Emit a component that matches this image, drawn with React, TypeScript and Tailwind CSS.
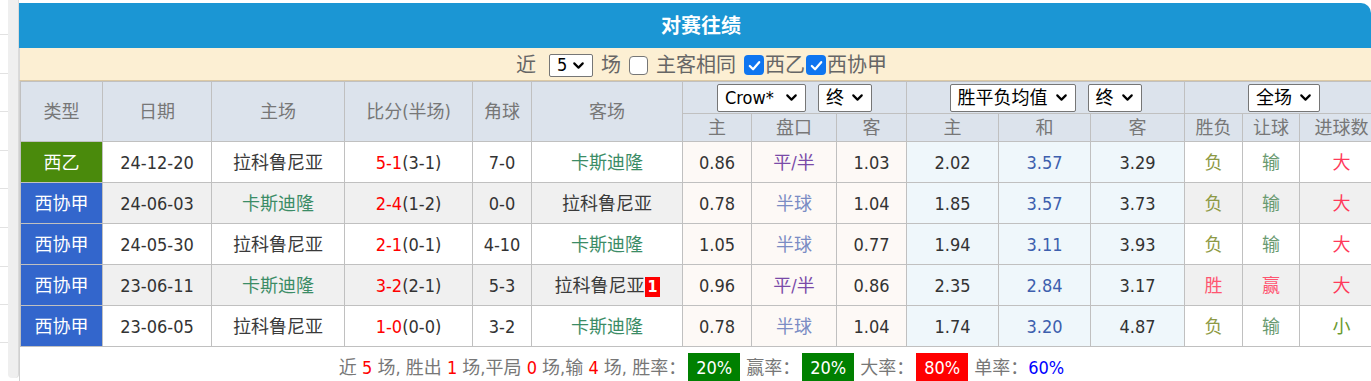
import { ChevronDown } from 'lucide-react';

const FONT = "font-['DejaVu_Sans_Condensed','Liberation_Sans','Noto_Sans_CJK_SC',sans-serif]";

type Row = {
  type: string;
  typeBg: string;
  date: string;
  home: string;
  score: string;
  half: string;
  corner: string;
  away: string;
  badge?: string;
  o1: string;
  line: string;
  o2: string;
  e1: string;
  e2: string;
  e3: string;
  r1: string;
  r2: string;
  r3: string;
};

const rows: Row[] = [
  { type: '西乙', typeBg: 'bg-[#4a8a0c]', date: '24-12-20', home: '拉科鲁尼亚', score: '5-1', half: '(3-1)', corner: '7-0', away: '卡斯迪隆', o1: '0.86', line: '平/半', o2: '1.03', e1: '2.02', e2: '3.57', e3: '3.29', r1: '负', r2: '输', r3: '大' },
  { type: '西协甲', typeBg: 'bg-[#3366cc]', date: '24-06-03', home: '卡斯迪隆', score: '2-4', half: '(1-2)', corner: '0-0', away: '拉科鲁尼亚', o1: '0.78', line: '半球', o2: '1.04', e1: '1.85', e2: '3.57', e3: '3.73', r1: '负', r2: '输', r3: '大' },
  { type: '西协甲', typeBg: 'bg-[#3366cc]', date: '24-05-30', home: '拉科鲁尼亚', score: '2-1', half: '(0-1)', corner: '4-10', away: '卡斯迪隆', o1: '1.05', line: '半球', o2: '0.77', e1: '1.94', e2: '3.11', e3: '3.93', r1: '负', r2: '输', r3: '大' },
  { type: '西协甲', typeBg: 'bg-[#3366cc]', date: '23-06-11', home: '卡斯迪隆', score: '3-2', half: '(2-1)', corner: '5-3', away: '拉科鲁尼亚', badge: '1', o1: '0.96', line: '平/半', o2: '0.86', e1: '2.35', e2: '2.84', e3: '3.17', r1: '胜', r2: '赢', r3: '大' },
  { type: '西协甲', typeBg: 'bg-[#3366cc]', date: '23-06-05', home: '拉科鲁尼亚', score: '1-0', half: '(0-0)', corner: '3-2', away: '卡斯迪隆', o1: '0.78', line: '半球', o2: '1.04', e1: '1.74', e2: '3.20', e3: '4.87', r1: '负', r2: '输', r3: '小' },
];

const sideLines = ['h-[35px]', 'h-[39px]', 'h-[38px]', 'h-[39px]', 'h-[38px]', 'h-[39px]', 'h-[39px]', 'h-[38px]', 'h-[38px]'];

function teamColor(name: string) {
  return name === '卡斯迪隆' ? 'text-[#3b8c66]' : 'text-[#3a3a3a]';
}

function resultColor(v: string) {
  if (v === '胜' || v === '赢') return 'text-[#ff5570]';
  if (v === '大') return 'text-[#ff3a5a]';
  if (v === '小') return 'text-[#6a9a30]';
  if (v === '输') return 'text-[#6a9a70]';
  return 'text-[#8e9a45]';
}

function Select({ label, w, h = 'h-[28px]' }: { label: string; w: string; h?: string }) {
  return (
    <span className={`inline-flex items-center justify-between ${h} ${w} bg-white border border-[#767676] rounded-[2px] pl-[7px] pr-[5px] text-black text-[18px] leading-none`}>
      <span>{label}</span>
      <ChevronDown className="w-[17px] h-[17px]" strokeWidth={3} />
    </span>
  );
}

function Check({ on }: { on: boolean }) {
  if (!on) {
    return <span className="inline-block w-[19px] h-[19px] rounded-[4px] border border-[#767676] bg-white" />;
  }
  return (
    <span className="inline-flex items-center justify-center w-[20px] h-[20px] rounded-[4px] bg-[#0f75f0]">
      <svg viewBox="0 0 16 16" className="w-[15px] h-[15px]" fill="none" stroke="white" strokeWidth={2.4} strokeLinecap="round" strokeLinejoin="round">
        <path d="M3 8.5 L6.5 12 L13 4.5" />
      </svg>
    </span>
  );
}

const th = 'border border-[#c0c0c0] text-center font-normal text-[#777]';
const td = 'border border-[#c0c0c0] text-center p-0';

export default function App() {
  return (
    <div className={`w-[1371px] h-[381px] overflow-hidden flex bg-white text-[18px] ${FONT}`}>
      {/* 왼쪽 가장자리 */}
      <div className="w-[8px] shrink-0 flex flex-col">
        {sideLines.map((h, i) => (
          <div key={i} className={`${h} border-b border-[#e2e2e2]`} />
        ))}
      </div>
      <div className="w-[11px] shrink-0 h-[378px] bg-[#efefef] border-r border-[#dadada] rounded-b-[4px]" />

      <div className="w-[1364px] shrink-0">
        {/* 제목 */}
        <div className="mt-[3px] w-[1352px] h-[45px] bg-[#1b96d4] rounded-tr-[10px] flex items-center justify-center pl-[12px]">
          <span className="text-white text-[20px] font-bold">对赛往绩</span>
        </div>

        {/* 필터 */}
        <div className="h-[33px] bg-[#fcefd3] border-b border-[#dcc9a4] border-l border-l-[#d8d8d8] flex items-center justify-center text-[#666] text-[20px] pt-[2px]">
          <span className="mr-[13px]">近</span>
          <Select label="5" w="w-[44px]" h="h-[23px]" />
          <span className="ml-[8px] mr-[8px]">场</span>
          <Check on={false} />
          <span className="ml-[8px] mr-[8px]">主客相同</span>
          <Check on />
          <span className="mx-[1px]">西乙</span>
          <Check on />
          <span className="ml-[1px]">西协甲</span>
        </div>

        {/* 표 */}
        <div className="border-l border-[#d0d0d0]">
          <table className="table-fixed border-collapse w-[1363px]">
            <colgroup>
              <col className="w-[82px]" />
              <col className="w-[109px]" />
              <col className="w-[133px]" />
              <col className="w-[128px]" />
              <col className="w-[59px]" />
              <col className="w-[151px]" />
              <col className="w-[69px]" />
              <col className="w-[85px]" />
              <col className="w-[70px]" />
              <col className="w-[92px]" />
              <col className="w-[92px]" />
              <col className="w-[94px]" />
              <col className="w-[58px]" />
              <col className="w-[57px]" />
              <col className="w-[84px]" />
            </colgroup>
            <thead className="bg-[#dce3ec]">
              <tr className="h-[32px]">
                <th rowSpan={2} className={th}>类型</th>
                <th rowSpan={2} className={th}>日期</th>
                <th rowSpan={2} className={th}>主场</th>
                <th rowSpan={2} className={th}>比分(半场)</th>
                <th rowSpan={2} className={th}>角球</th>
                <th rowSpan={2} className={th}>客场</th>
                <th colSpan={3} className={th}>
                  <div className="flex items-center justify-center gap-[12px]">
                    <Select label="Crow*" w="w-[89px]" />
                    <Select label="终" w="w-[54px]" />
                  </div>
                </th>
                <th colSpan={3} className={th}>
                  <div className="flex items-center justify-center gap-[12px]">
                    <Select label="胜平负均值" w="w-[126px]" />
                    <Select label="终" w="w-[54px]" />
                  </div>
                </th>
                <th colSpan={3} className={th}>
                  <div className="flex items-center justify-center">
                    <Select label="全场" w="w-[72px]" />
                  </div>
                </th>
              </tr>
              <tr className="h-[26px]">
                <th className={th}>主</th>
                <th className={th}>盘口</th>
                <th className={th}>客</th>
                <th className={th}>主</th>
                <th className={th}>和</th>
                <th className={th}>客</th>
                <th className={th}>胜负</th>
                <th className={th}>让球</th>
                <th className={`${th} whitespace-nowrap`}>进球数</th>
              </tr>
            </thead>
            <tbody>
              {rows.map((r, i) => {
                const band = i % 2 === 1 ? 'bg-[#f0f0f0]' : 'bg-white';
                return (
                  <tr key={i} className="h-[41px]">
                    <td className={`${td} ${r.typeBg} text-white`}>{r.type}</td>
                    <td className={`${td} ${band} text-[#333]`}>{r.date}</td>
                    <td className={`${td} ${band} ${teamColor(r.home)}`}>{r.home}</td>
                    <td className={`${td} ${band} text-[#333]`}>
                      <span className="text-[#ff0000]">{r.score}</span>{r.half}
                    </td>
                    <td className={`${td} ${band} text-[#333]`}>{r.corner}</td>
                    <td className={`${td} ${band} ${teamColor(r.away)}`}>
                      {r.away}
                      {r.badge && (
                        <span className="inline-block align-middle ml-[1px] px-[2px] h-[20px] leading-[20px] bg-[#ff0000] text-white font-bold text-[16px]">{r.badge}</span>
                      )}
                    </td>
                    <td className={`${td} bg-[#fdf9f6] text-[#333]`}>{r.o1}</td>
                    <td className={`${td} bg-[#fdf9f6] ${r.line === '半球' ? 'text-[#7b8cc4]' : 'text-[#7a4aa8]'}`}>{r.line}</td>
                    <td className={`${td} bg-[#fdf9f6] text-[#333]`}>{r.o2}</td>
                    <td className={`${td} bg-[#eff7fb] text-[#333]`}>{r.e1}</td>
                    <td className={`${td} bg-[#eff7fb] text-[#3d5fae]`}>{r.e2}</td>
                    <td className={`${td} bg-[#eff7fb] text-[#333]`}>{r.e3}</td>
                    <td className={`${td} ${band} ${resultColor(r.r1)}`}>{r.r1}</td>
                    <td className={`${td} ${band} ${resultColor(r.r2)}`}>{r.r2}</td>
                    <td className={`${td} ${band} ${resultColor(r.r3)}`}>{r.r3}</td>
                  </tr>
                );
              })}
            </tbody>
          </table>

          {/* 통계 */}
          <div className="pt-[6px] h-[40px] flex items-start justify-center text-[#777]">
            <div className="flex items-center h-[28px] whitespace-pre">
              <span>近 </span><span className="text-[#ff0000]">5</span><span> 场, 胜出 </span>
              <span className="text-[#ff0000]">1</span><span> 场,平局 </span>
              <span className="text-[#ff0000]">0</span><span> 场,输 </span>
              <span className="text-[#ff0000]">4</span><span> 场, 胜率：</span>
              <span className="ml-[2px] mr-[6px] h-[28px] px-[8px] flex items-center bg-[#008000] text-white">20%</span>
              <span>赢率：</span>
              <span className="ml-[2px] mr-[6px] h-[28px] px-[8px] flex items-center bg-[#008000] text-white">20%</span>
              <span>大率：</span>
              <span className="ml-[2px] mr-[6px] h-[28px] px-[8px] flex items-center bg-[#ff0000] text-white">80%</span>
              <span>单率：</span>
              <span className="text-[#0000ff]">60%</span>
            </div>
          </div>
        </div>
      </div>
    </div>
  );
}
